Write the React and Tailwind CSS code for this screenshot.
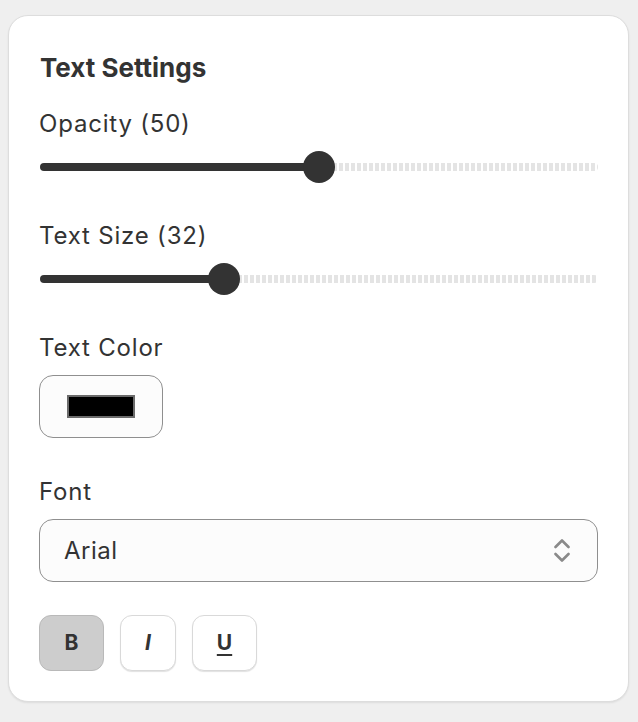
import React, { useState } from "react";

const TRACK_W = 558;
const THUMB = 32;

function Slider({ value, min = 0, max = 100 }) {
  const pct = (value - min) / (max - min);
  const center = THUMB / 2 + pct * (TRACK_W - THUMB);
  return (
    <div className="relative h-8 w-[558px] ml-px">
      <div
        className="absolute left-0 top-[12px] h-2 rounded-full bg-[#333333]"
        style={{ width: center }}
      />
      <div
        className="absolute right-0 top-[12px] h-2 rounded-r-full bg-[image:repeating-linear-gradient(90deg,#e4e4e4_0_4px,transparent_4px_6px)]"
        style={{ left: center + 8 }}
      />
      <div
        className="absolute top-0 h-8 w-8 rounded-full bg-[#333333]"
        style={{ left: center - THUMB / 2 }}
      />
    </div>
  );
}

function Label({ children }) {
  return (
    <div className="text-[24px] leading-[30px] tracking-[0.8px] text-[#333333]">
      {children}
    </div>
  );
}

function UpDown() {
  return (
    <svg width="16" height="26" viewBox="0 0 16 26" fill="none">
      <path
        d="M1.5 9 L8 2.5 L14.5 9"
        stroke="#8a8a8a"
        strokeWidth="2.6"
        strokeLinecap="round"
        strokeLinejoin="round"
      />
      <path
        d="M1.5 16 L8 22.5 L14.5 16"
        stroke="#8a8a8a"
        strokeWidth="2.6"
        strokeLinecap="round"
        strokeLinejoin="round"
      />
    </svg>
  );
}

export default function App() {
  const [bold, setBold] = useState(true);
  const [italic, setItalic] = useState(false);
  const [underline, setUnderline] = useState(false);

  const styleBtn = (on) =>
    on
      ? "h-14 rounded-xl border border-[#b9b9b9] bg-[#cdcdcd] text-[21px] font-bold text-[#333333]"
      : "h-14 rounded-xl border border-[#d9d9d9] bg-white shadow-[0_1px_1px_rgba(0,0,0,0.12)] text-[21px] font-bold text-[#333333]";

  return (
    <div
      className="min-h-screen bg-[#efefef] pt-[15px] pl-2"
      style={{ fontFamily: "Inter, 'Liberation Sans', sans-serif" }}
    >
      <div className="w-[621px] rounded-[20px] border border-[#dddddd] bg-white px-[30px] pt-[36px] pb-[30px] shadow-[0_1px_2px_rgba(0,0,0,0.08)]">
        <h3 className="text-[26px] leading-[32px] font-bold text-[#333333] ml-px">
          Text Settings
        </h3>

        <div className="mt-[25px] flex flex-col gap-[12px]">
          <Label>Opacity (50)</Label>
          <Slider value={50} />
        </div>

        <div className="mt-[38px] flex flex-col gap-[12px]">
          <Label>Text Size (32)</Label>
          <Slider value={32} />
        </div>

        <div className="mt-[38px] flex flex-col items-start gap-[12px]">
          <Label>Text Color</Label>
          <button className="flex h-[63px] w-[124px] items-center justify-center rounded-[14px] border border-[#8f8f8f] bg-[#fcfcfc]">
            <span className="block h-[23px] w-[68px] border-2 border-[#6b6b6b] bg-black" />
          </button>
        </div>

        <div className="mt-[39px] flex flex-col gap-[12px]">
          <Label>Font</Label>
          <div className="flex h-[63px] w-[559px] items-center justify-between rounded-[14px] border border-[#8f8f8f] bg-[#fcfcfc] pl-6 pr-[27px]">
            <span className="text-[24px] tracking-[0.5px] text-[#333333]">Arial</span>
            <UpDown />
          </div>
        </div>

        <div className="mt-[33px] flex gap-4">
          <button className={styleBtn(bold) + " w-[65px]"} onClick={() => setBold(!bold)}>
            B
          </button>
          <button
            className={styleBtn(italic) + " w-[56px] italic"}
            onClick={() => setItalic(!italic)}
          >
            I
          </button>
          <button
            className={styleBtn(underline) + " w-[65px] underline underline-offset-4"}
            onClick={() => setUnderline(!underline)}
          >
            U
          </button>
        </div>
      </div>
    </div>
  );
}
